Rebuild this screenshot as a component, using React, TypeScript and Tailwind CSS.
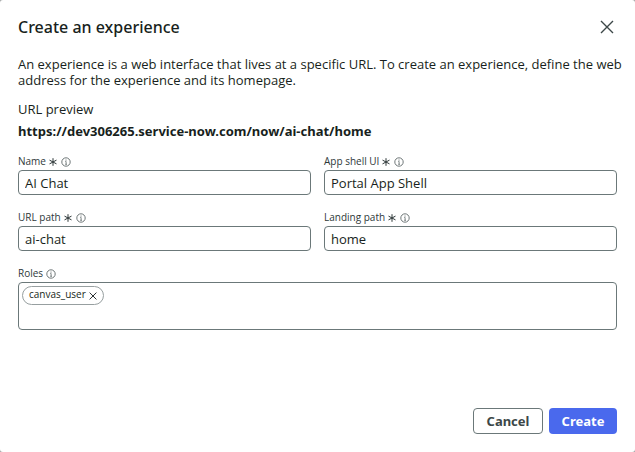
import React from "react";

const InfoIcon = () => (
  <svg viewBox="0 0 10 10" className="size-[10px] shrink-0" fill="none" stroke="#4b5657" aria-hidden="true">
    <circle cx="5" cy="5" r="4.2" strokeWidth="0.8" />
    <path d="M4.3 4.5H5.1V7.3M4.2 7.3H6" strokeWidth="0.7" />
    <circle cx="5" cy="3" r="0.55" fill="#4b5657" stroke="none" />
  </svg>
);

const RequiredIcon = () => (
  <svg viewBox="0 0 8 8" className="mt-px size-2 shrink-0" fill="none" stroke="#2e3839" strokeWidth="1" aria-hidden="true">
    <path d="M4 0.2V7.8M0.5 2.1L7.5 5.9M7.5 2.1L0.5 5.9" />
  </svg>
);

const CloseIcon = ({ className }: { className: string }) => (
  <svg viewBox="0 0 14 14" className={className} fill="none" stroke="currentColor" aria-hidden="true">
    <path d="M1 1L13 13M13 1L1 13" />
  </svg>
);

type FieldLabelProps = {
  id: string;
  label: string;
  required?: boolean;
};

const FieldLabel = ({ id, label, required }: FieldLabelProps) => (
  <div className="mb-[3px] flex h-3 items-center gap-1">
    <label htmlFor={id} className="-mr-px text-[10px] leading-3 text-[#2e3839]">
      {label}
    </label>
    {required && <RequiredIcon />}
    <button type="button" aria-label={`About ${label}`} className="mt-px">
      <InfoIcon />
    </button>
  </div>
);

const fields = [
  { id: "name", label: "Name", value: "AI Chat" },
  { id: "app-shell", label: "App shell UI", value: "Portal App Shell" },
  { id: "url-path", label: "URL path", value: "ai-chat" },
  { id: "landing-path", label: "Landing path", value: "home" }
];

const App = () => {
  return (
    <div className="bg-[#a5a8a8] font-['Open_Sans','Noto_Sans',sans-serif] text-[13px] leading-4 text-[#181f20]">
      <form
        role="dialog"
        aria-labelledby="dialog-title"
        className="flex min-h-screen flex-col rounded-[3px] bg-white px-[18px] pt-[15px] pb-[18px]"
        onSubmit={(e) => e.preventDefault()}
      >
        <header className="flex items-center justify-between">
          <h1 id="dialog-title" className="font-['Noto_Sans',sans-serif] text-base leading-6 font-medium">
            Create an experience
          </h1>
          <button type="button" aria-label="Close" className="mr-[3px] text-[#3c4748]">
            <CloseIcon className="size-[14px] stroke-[1.4]" />
          </button>
        </header>

        <p className="-mr-2 mt-[17px]">
          An experience is a web interface that lives at a specific URL. To create an experience, define the web
          address for the experience and its homepage.
        </p>

        <p className="mt-[13px]">URL preview</p>
        <p className="mt-[6px] font-['Noto_Sans',sans-serif] font-bold">
          https://dev306265.service-now.com/now/ai-chat/home
        </p>

        <div className="mt-4 grid grid-cols-2 gap-x-[13px] gap-y-4">
          {fields.map((field) => (
            <div key={field.id}>
              <FieldLabel id={field.id} label={field.label} required />
              <input
                id={field.id}
                type="text"
                required
                defaultValue={field.value}
                className="block h-[25px] w-full rounded border border-[#6b7879] px-[6px]"
              />
            </div>
          ))}
        </div>

        <div className="mt-4">
          <FieldLabel id="roles" label="Roles" />
          <div className="flex h-12 items-start rounded border border-[#6b7879] p-[3px]">
            <span className="flex h-[19px] items-center gap-[3px] rounded-full border border-[#979fa0] px-[6px] text-[10px] leading-3">
              <span className="pb-[3px]">canvas_user</span>
              <button type="button" aria-label="Remove canvas_user" className="mt-px">
                <CloseIcon className="size-2 stroke-[1.6]" />
              </button>
            </span>
            <input id="roles" type="text" className="ml-2 min-w-0 flex-1 outline-none" />
          </div>
        </div>

        <footer className="mt-auto flex justify-end gap-[6px] font-['Noto_Sans',sans-serif] font-bold">
          <button type="button" className="h-[26px] min-w-[70px] rounded border border-[#6b7879] px-3 text-[#3c4748]">
            Cancel
          </button>
          <button type="submit" className="h-[26px] min-w-[68px] rounded bg-[#4a69ed] px-3 text-white">
            Create
          </button>
        </footer>
      </form>
    </div>
  );
};

export default App;
